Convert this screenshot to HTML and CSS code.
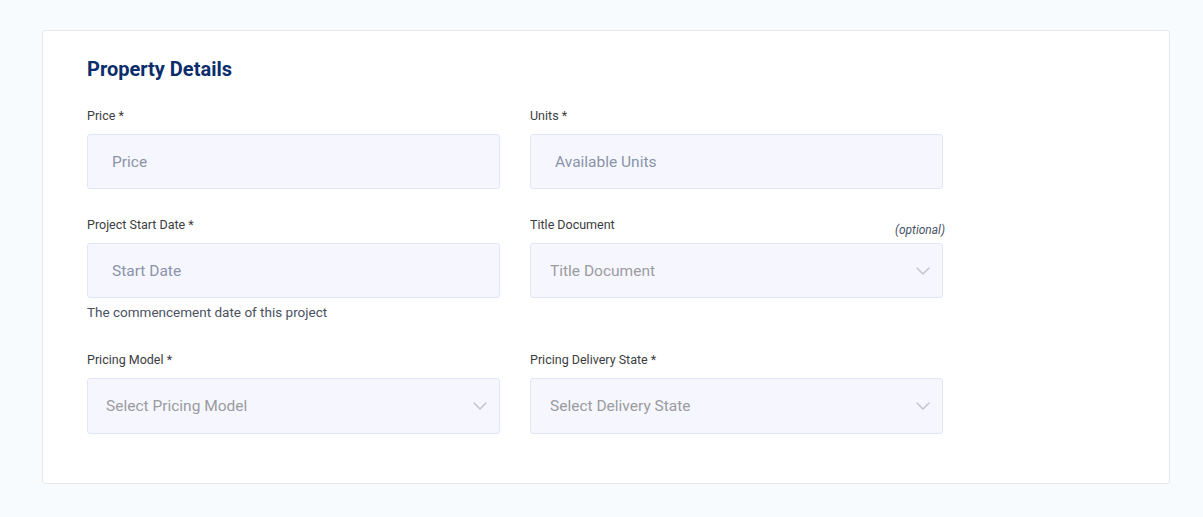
FILE: index.html
```html
<!DOCTYPE html>
<html lang="en">
<head>
<meta charset="utf-8">
<title>Property Details</title>
<link rel="stylesheet" href="styles.css">
</head>
<body>
<main class="page">
  <section class="card">
    <h2 class="card-title">Property Details</h2>
    <div class="form-grid">
      <div class="field">
        <div class="label-row"><label class="label">Price *</label></div>
        <div class="input"><span class="placeholder">Price</span></div>
      </div>
      <div class="field">
        <div class="label-row"><label class="label">Units *</label></div>
        <div class="input"><span class="placeholder">Available Units</span></div>
      </div>
      <div class="field field-help">
        <div class="label-row"><label class="label">Project Start Date *</label></div>
        <div class="input"><span class="placeholder">Start Date</span></div>
        <p class="help">The commencement date of this project</p>
      </div>
      <div class="field">
        <div class="label-row"><label class="label">Title Document</label><span class="optional">(optional)</span></div>
        <div class="input select"><span class="placeholder grey">Title Document</span>
          <svg class="chev" width="14" height="8" viewBox="0 0 14 8"><path d="M1 1l6 6 6-6" fill="none" stroke="#c3c4cc" stroke-width="1.5" stroke-linecap="round" stroke-linejoin="round"/></svg>
        </div>
      </div>
      <div class="field">
        <div class="label-row"><label class="label">Pricing Model *</label></div>
        <div class="input select select-narrow tall"><span class="placeholder grey">Select Pricing Model</span>
          <svg class="chev" width="14" height="8" viewBox="0 0 14 8"><path d="M1 1l6 6 6-6" fill="none" stroke="#c3c4cc" stroke-width="1.5" stroke-linecap="round" stroke-linejoin="round"/></svg>
        </div>
      </div>
      <div class="field">
        <div class="label-row"><label class="label">Pricing Delivery State *</label></div>
        <div class="input select tall"><span class="placeholder grey">Select Delivery State</span>
          <svg class="chev" width="14" height="8" viewBox="0 0 14 8"><path d="M1 1l6 6 6-6" fill="none" stroke="#c3c4cc" stroke-width="1.5" stroke-linecap="round" stroke-linejoin="round"/></svg>
        </div>
      </div>
    </div>
  </section>
</main>
</body>
</html>
```
FILE: styles.css
```css
* { box-sizing: border-box; }
html, body { margin: 0; padding: 0; }
body {
  background: #f7fbfe;
  font-family: Roboto, "Liberation Sans", sans-serif;
  color: #333;
}
.page {
  padding: 30px 33px 34px 42px;
}
.card {
  background: #ffffff;
  border: 1px solid #e6e8ec;
  border-radius: 3px;
  padding: 26px 44px 48px 44px;
  height: 454px;
}
.card-title {
  margin: 0 0 26px 0;
  font-size: 20px;
  line-height: 24px;
  font-weight: 700;
  color: #0c2d6b;
}
.form-grid {
  width: 856px;
  display: grid;
  grid-template-columns: 413px 413px;
  column-gap: 30px;
  row-gap: 27px;
}
.field { display: flex; flex-direction: column; }
.field-help { margin-bottom: 3px; }
.label-row {
  display: flex;
  justify-content: space-between;
  align-items: flex-end;
  height: 18px;
  margin-bottom: 9px;
}
.label {
  font-size: 12.5px;
  line-height: 18px;
  color: #3b3d42;
}
.optional {
  font-size: 12px;
  font-style: italic;
  color: #4a5366;
  margin-right: -2px;
  line-height: 14px;
  margin-bottom: -3px;
}
.input {
  height: 55px;
  background: #f6f7fe;
  border: 1px solid #e2e5f8;
  border-radius: 3px;
  display: flex;
  align-items: center;
  padding: 0 24px;
}
.input.tall { height: 56px; }
.select { padding: 0 12px 0 19px; justify-content: space-between; }
.select-narrow { padding-left: 18px; }
.placeholder {
  font-size: 15.5px;
  color: #8a93a8;
}
.placeholder.grey { color: #9b9ba0; }
.help {
  margin: 5px 0 0 0;
  font-size: 13.5px;
  line-height: 18px;
  color: #4a5162;
}
```
